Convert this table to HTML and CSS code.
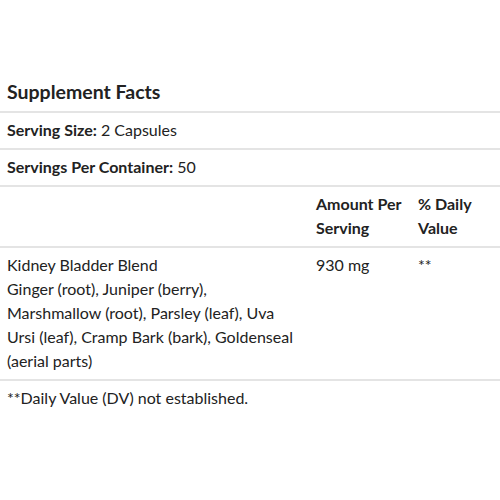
FILE: index.html
```html
<!DOCTYPE html>
<html>
<head>
<meta charset="utf-8">
<link rel="stylesheet" href="styles.css">
</head>
<body>
<div class="facts">
  <div class="title">Supplement Facts</div>
  <div class="row"><div class="cell"><b>Serving Size:</b> 2 Capsules</div></div>
  <div class="row"><div class="cell"><b>Servings Per Container:</b> 50</div></div>
  <div class="row grid">
    <div class="cell"></div>
    <div class="cell"><b>Amount Per Serving</b></div>
    <div class="cell"><b>% Daily Value</b></div>
  </div>
  <div class="row grid">
    <div class="cell">Kidney Bladder Blend<br>Ginger (root), Juniper (berry), Marshmallow (root), Parsley (leaf), Uva Ursi (leaf), Cramp Bark (bark), Goldenseal (aerial parts)</div>
    <div class="cell">930 mg</div>
    <div class="cell">**</div>
  </div>
  <div class="row"><div class="cell">**Daily Value (DV) not established.</div></div>
</div>
</body>
</html>
```
FILE: styles.css
```css
html, body {
  margin: 0;
  padding: 0;
  background: #fff;
}
body {
  font-family: Lato, "Open Sans", sans-serif;
  font-size: 16px;
  line-height: 24px;
  color: #222;
}
.facts {
  padding-top: 80px;
}
.title {
  font-size: 19.5px;
  font-weight: bold;
  padding: 0 7px 7px;
  line-height: 24px;
}
.row {
  border-top: 2px solid #e4e4e4;
}
.grid {
  display: grid;
  grid-template-columns: 309px 102px 1fr;
}
.cell {
  padding: 5px 7px 6px;
}
b {
  font-weight: bold;
}
```
